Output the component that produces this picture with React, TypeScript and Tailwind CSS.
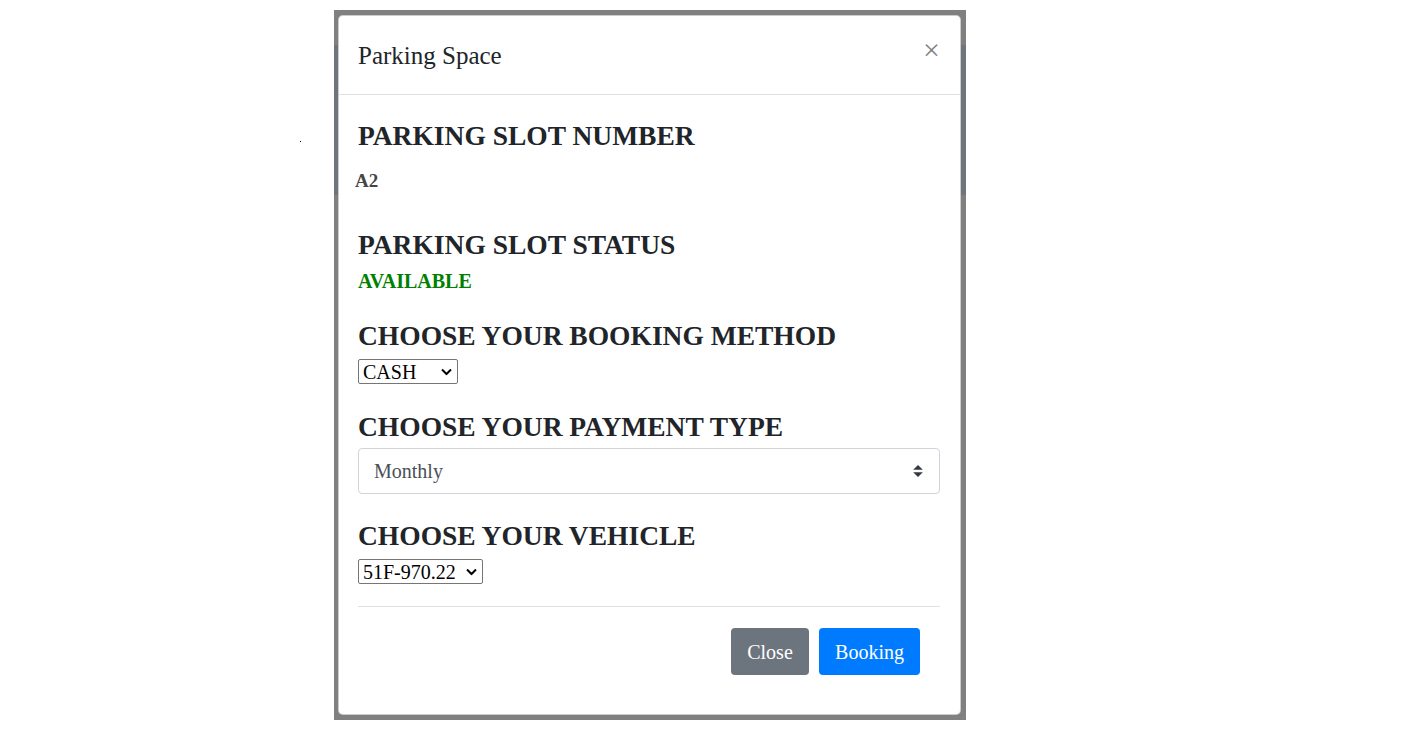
import React from "react";

const serif = { fontFamily: '"Liberation Serif", "Times New Roman", serif' };

function Chevron() {
  return (
    <svg width="11" height="7" viewBox="0 0 11 7" className="pointer-events-none absolute right-[6px] top-1/2 -translate-y-1/2">
      <path d="M1 1l4.5 4.5L10 1" fill="none" stroke="#000" strokeWidth="2" />
    </svg>
  );
}

function NativeSelect({ value, width }: { value: string; width: string }) {
  return (
    <div className={`relative ${width} h-[25px]`}>
      <select
        defaultValue={value}
        className="h-full w-full appearance-none rounded-[2px] border border-[#767676] bg-white pl-[4px] text-[20px] leading-none text-black"
      >
        <option value={value}>{value}</option>
      </select>
      <Chevron />
    </div>
  );
}

function Heading({ children, className = "" }: { children: React.ReactNode; className?: string }) {
  return <h2 className={`h-[34px] text-[27.5px] font-bold leading-[34px] text-[#212529] ${className}`}>{children}</h2>;
}

export default function App() {
  return (
    <div className="relative min-h-screen bg-white pt-[10px]" style={serif}>
      <span className="absolute left-[300px] top-[141px] h-[1px] w-[1px] bg-black" />
      <div className="ml-[334px] h-[710px] w-[632px] bg-[linear-gradient(to_bottom,#808080_35px,#6e757c_35px,#6e757c_185px,#808080_185px)] pl-[4px] pt-[5px]">
        <div className="flex h-[700px] w-[623px] flex-col rounded-[5px] border border-black/20 bg-white">
          <div className="flex h-[79px] items-center justify-between border-b border-[#dee2e6] pl-[19px] pr-5">
            <h5 className="text-[25px] leading-[37px] text-[#212529]">Parking Space</h5>
            <button className="mb-[10px] text-[30px] leading-none text-black/50">×</button>
          </div>
          <div className="flex flex-1 flex-col pl-[19px] pr-5 pt-[24px]">
            <Heading>PARKING SLOT NUMBER</Heading>
            <p className="-ml-[3px] mt-[17px] text-[19px] font-bold leading-[22px] text-[#464646]">A2</p>
            <Heading className="mt-[36px]">PARKING SLOT STATUS</Heading>
            <p className="mt-[8px] text-[20px] font-bold leading-[22px] text-[#008000]">AVAILABLE</p>
            <Heading className="mt-[27px]">CHOOSE YOUR BOOKING METHOD</Heading>
            <div className="mt-[6px]">
              <NativeSelect value="CASH" width="w-[100px]" />
            </div>
            <Heading className="mt-[26px]">CHOOSE YOUR PAYMENT TYPE</Heading>
            <div className="relative mt-[4px] h-[46px] w-full">
              <select
                defaultValue="Monthly"
                className="h-full w-full appearance-none rounded-[4px] border border-[#ced4da] bg-white pl-[15px] text-[20px] text-[#495057]"
              >
                <option>Monthly</option>
              </select>
              <svg width="10" height="12" viewBox="0 0 4 5" className="pointer-events-none absolute right-[17px] top-1/2 -translate-y-1/2">
                <path fill="#343a40" d="M2 0L0 2h4zm0 5L0 3h4z" />
              </svg>
            </div>
            <Heading className="mt-[25px]">CHOOSE YOUR VEHICLE</Heading>
            <div className="mt-[6px]">
              <NativeSelect value="51F-970.22" width="w-[125px]" />
            </div>
            <div className="mt-[22px] flex justify-end gap-[10px] border-t border-[#dee2e6] pr-5 pt-[21px]">
              <button className="h-[47px] w-[78px] rounded-[4px] bg-[#6c757d] text-[20px] text-white">Close</button>
              <button className="h-[47px] w-[101px] rounded-[4px] bg-[#007bff] text-[20px] text-white">Booking</button>
            </div>
          </div>
        </div>
      </div>
    </div>
  );
}
